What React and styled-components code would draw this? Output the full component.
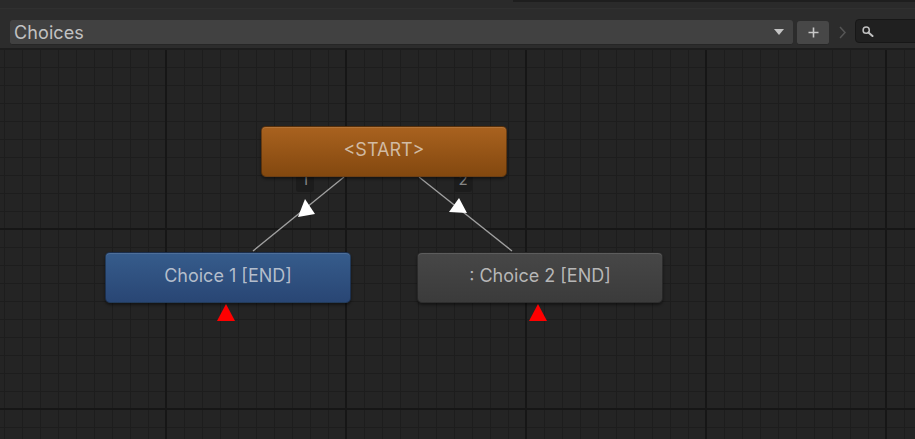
import React from "react";
import styled, { createGlobalStyle } from "styled-components";

const Global = createGlobalStyle`
  html, body { margin: 0; padding: 0; background: #232323; overflow: hidden; }
  * { box-sizing: border-box; }
  body { font-family: Inter, "Noto Sans", sans-serif; }
`;

const Window = styled.div`
  width: 915px;
  height: 439px;
  display: flex;
  flex-direction: column;
  background: #2b2b2b;
  overflow: hidden;
`;

const TopStrip = styled.div`
  height: 8px;
  display: flex;
  justify-content: flex-end;
  background: #2a2a2a;
`;

const StripEdge = styled.div`
  width: 402px;
  height: 2px;
  background: #1e1e1e;
`;

const Toolbar = styled.div`
  height: 42px;
  display: flex;
  align-items: flex-start;
  padding: 11px 0 0 10px;
  background: #2c2c2c;
  border-top: 1px solid #303030;
  border-bottom: 2px solid #1d1d1d;
  overflow: hidden;
  & > * { flex-shrink: 0; }
`;

const Dropdown = styled.div`
  width: 783px;
  height: 25px;
  border-radius: 3px;
  background: #414141;
  border-bottom: 1px solid #262626;
  display: flex;
  align-items: center;
  justify-content: space-between;
  padding: 0 9px 0 4px;
  color: #c2c2c2;
  font-size: 18px;
  letter-spacing: 0.1px;
`;

const IconButton = styled.div`
  width: 32px;
  height: 24px;
  margin: 1px 0 0 4px;
  border-radius: 3px;
  background: #474747;
  border-bottom: 1px solid #262626;
  display: flex;
  align-items: center;
  justify-content: center;
`;

const Crumb = styled.div`
  width: 26px;
  height: 24px;
  display: flex;
  align-items: center;
  justify-content: center;
`;

const Search = styled.div`
  width: 80px;
  height: 24px;
  margin-top: -1px;
  border-radius: 4px;
  background: #202020;
  border: 1px solid #171717;
  display: flex;
  align-items: center;
  padding-left: 6px;
`;

const Canvas = styled.div`
  position: relative;
  flex: 1;
  background-color: #242424;
  background-image:
    linear-gradient(to right, #161616 0 2px, transparent 2px),
    linear-gradient(to bottom, #161616 0 2px, transparent 2px),
    linear-gradient(to right, #1d1d1d 0 1px, transparent 1px),
    linear-gradient(to bottom, #1d1d1d 0 1px, transparent 1px);
  background-size: 180px 180px, 180px 180px, 18px 18px, 18px 18px;
  background-position: 165px 0, 0 178px, 4px 0, 0 17px;
`;

const Wires = styled.svg`
  position: absolute;
  left: 0;
  top: 0;
  width: 100%;
  height: 100%;
  pointer-events: none;
`;

const Node = styled.div`
  position: absolute;
  width: 246px;
  height: 51px;
  border-radius: 5px;
  display: flex;
  align-items: center;
  justify-content: center;
  padding-bottom: 4px;
  font-size: 18px;
  color: ${(p) => p.$ink};
  background: linear-gradient(to bottom, ${(p) => p.$top}, ${(p) => p.$bottom});
  border: 1px solid rgba(0, 0, 0, 0.35);
  box-shadow: inset 0 1px 0 rgba(255, 255, 255, 0.12), 0 2px 3px rgba(0, 0, 0, 0.45);
  z-index: 2;
`;

const Tag = styled.div`
  position: absolute;
  width: 18px;
  height: 24px;
  border-radius: 3px;
  background: #1c1c1c;
  color: #858585;
  font-size: 15px;
  display: flex;
  align-items: flex-end;
  justify-content: center;
  padding-bottom: 3px;
  z-index: 1;
`;

const Marker = styled.div`
  position: absolute;
  width: 0;
  height: 0;
  border-left: 9px solid transparent;
  border-right: 9px solid transparent;
  border-bottom: 17px solid #ff0000;
  z-index: 2;
`;

const states = [
  { label: "<START>", left: 261, top: 76, top0: "#a9621f", bottom0: "#83480f", ink: "rgba(220,205,190,0.85)" },
  { label: "Choice 1 [END]", left: 105, top: 202, top0: "#365c8c", bottom0: "#294674", ink: "rgba(205,210,218,0.85)" },
  { label: ": Choice 2 [END]", left: 417, top: 202, top0: "#474747", bottom0: "#3b3b3b", ink: "rgba(205,205,205,0.85)" },
];

const transitions = [
  { from: [344, 127], to: [253, 201], head: "305,149 298,167 315,164", tag: "1", tagLeft: 296 },
  { from: [419, 127], to: [512, 201], head: "459,148 449,162 467,163", tag: "2", tagLeft: 454 },
];

export default function App() {
  return (
    <>
      <Global />
      <Window>
        <TopStrip>
          <StripEdge />
        </TopStrip>
        <Toolbar>
          <Dropdown>
            <span>Choices</span>
            <svg width="10" height="6" viewBox="0 0 10 6">
              <polygon points="0,0 10,0 5,6" fill="#c4c4c4" />
            </svg>
          </Dropdown>
          <IconButton>
            <svg width="11" height="11" viewBox="0 0 11 11">
              <path d="M5.5 0.5v10M0.5 5.5h10" stroke="#c8c8c8" strokeWidth="1.6" />
            </svg>
          </IconButton>
          <Crumb>
            <svg width="7" height="13" viewBox="0 0 7 13">
              <path d="M1 1l5 5.5L1 12" fill="none" stroke="#555" strokeWidth="1.5" />
            </svg>
          </Crumb>
          <Search>
            <svg width="12" height="11" viewBox="0 0 12 11">
              <circle cx="4.2" cy="4.2" r="3.1" fill="none" stroke="#c0c0c0" strokeWidth="1.5" />
              <path d="M6.4 6.4L10.5 10" stroke="#c0c0c0" strokeWidth="2" strokeLinecap="round" />
            </svg>
          </Search>
        </Toolbar>
        <Canvas>
          {transitions.map((t) => (
            <Tag key={t.tag} style={{ left: t.tagLeft, top: 118 }}>
              {t.tag}
            </Tag>
          ))}
          <Wires>
            {transitions.map((t) => (
              <g key={t.tag}>
                <line
                  x1={t.from[0]}
                  y1={t.from[1]}
                  x2={t.to[0]}
                  y2={t.to[1]}
                  stroke="#a0a0a0"
                  strokeWidth="1.3"
                />
                <polygon points={t.head} fill="#ffffff" />
              </g>
            ))}
          </Wires>
          {states.map((s) => (
            <Node
              key={s.label}
              style={{ left: s.left, top: s.top }}
              $top={s.top0}
              $bottom={s.bottom0}
              $ink={s.ink}
            >
              {s.label}
            </Node>
          ))}
          <Marker style={{ left: 217, top: 254 }} />
          <Marker style={{ left: 529, top: 254 }} />
        </Canvas>
      </Window>
    </>
  );
}
